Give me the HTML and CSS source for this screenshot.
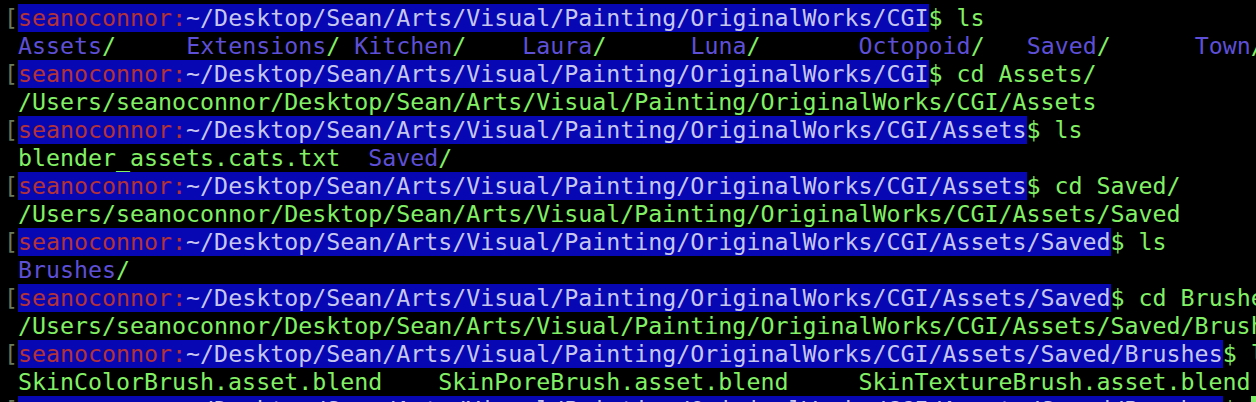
FILE: index.html
```html
<!DOCTYPE html>
<html>
<head>
<meta charset="utf-8">
<link rel="stylesheet" href="styles.css">
</head>
<body>
<div class="term">
<div class="row"><span class="br">[</span><span class="ps"><span class="u">seanoconnor:</span><span class="p">~/Desktop/Sean/Arts/Visual/Painting/OriginalWorks/CGI</span></span><span class="g">$ ls</span></div>
<div class="row"> <span class="d">Assets</span><span class="g">/</span>     <span class="d">Extensions</span><span class="g">/</span> <span class="d">Kitchen</span><span class="g">/</span>    <span class="d">Laura</span><span class="g">/</span>      <span class="d">Luna</span><span class="g">/</span>       <span class="d">Octopoid</span><span class="g">/</span>   <span class="d">Saved</span><span class="g">/</span>      <span class="d">Town</span><span class="g">/</span></div>
<div class="row"><span class="br">[</span><span class="ps"><span class="u">seanoconnor:</span><span class="p">~/Desktop/Sean/Arts/Visual/Painting/OriginalWorks/CGI</span></span><span class="g">$ cd Assets/</span></div>
<div class="row g"> /Users/seanoconnor/Desktop/Sean/Arts/Visual/Painting/OriginalWorks/CGI/Assets</div>
<div class="row"><span class="br">[</span><span class="ps"><span class="u">seanoconnor:</span><span class="p">~/Desktop/Sean/Arts/Visual/Painting/OriginalWorks/CGI/Assets</span></span><span class="g">$ ls</span></div>
<div class="row"> <span class="g">blender_assets.cats.txt</span>  <span class="d">Saved</span><span class="g">/</span></div>
<div class="row"><span class="br">[</span><span class="ps"><span class="u">seanoconnor:</span><span class="p">~/Desktop/Sean/Arts/Visual/Painting/OriginalWorks/CGI/Assets</span></span><span class="g">$ cd Saved/</span></div>
<div class="row g"> /Users/seanoconnor/Desktop/Sean/Arts/Visual/Painting/OriginalWorks/CGI/Assets/Saved</div>
<div class="row"><span class="br">[</span><span class="ps"><span class="u">seanoconnor:</span><span class="p">~/Desktop/Sean/Arts/Visual/Painting/OriginalWorks/CGI/Assets/Saved</span></span><span class="g">$ ls</span></div>
<div class="row"> <span class="d">Brushes</span><span class="g">/</span></div>
<div class="row"><span class="br">[</span><span class="ps"><span class="u">seanoconnor:</span><span class="p">~/Desktop/Sean/Arts/Visual/Painting/OriginalWorks/CGI/Assets/Saved</span></span><span class="g">$ cd Brushes/</span></div>
<div class="row g"> /Users/seanoconnor/Desktop/Sean/Arts/Visual/Painting/OriginalWorks/CGI/Assets/Saved/Brushes</div>
<div class="row"><span class="br">[</span><span class="ps"><span class="u">seanoconnor:</span><span class="p">~/Desktop/Sean/Arts/Visual/Painting/OriginalWorks/CGI/Assets/Saved/Brushes</span></span><span class="g">$ ls</span></div>
<div class="row g"> SkinColorBrush.asset.blend    SkinPoreBrush.asset.blend     SkinTextureBrush.asset.blend</div>
<div class="row"><span class="br">[</span><span class="ps"><span class="u">seanoconnor:</span><span class="p">~/Desktop/Sean/Arts/Visual/Painting/OriginalWorks/CGI/Assets/Saved/Brushes</span></span><span class="g">$ </span><span class="cur"> </span></div>
</div>
</body>
</html>
```

FILE: styles.css
```css
html, body {
  margin: 0;
  padding: 0;
  background: #000;
  overflow: hidden;
}
.term {
  padding: 4px 0 0 4px;
  font-family: "DejaVu Sans Mono", "Liberation Mono", monospace;
  font-size: 23.27px;
  color: #c4c4ec;
  width: 1252px;
  height: 398px;
  overflow: hidden;
}
.row {
  height: 28px;
  line-height: 28px;
  white-space: pre;
}
.br { color: #6b7a5c; }
.ps {
  background: #0707b4;
  display: inline-block;
  height: 28px;
  vertical-align: top;
}
.u { color: #b33238; }
.p { color: #c6c6ee; }
.g { color: #82f065; }
.d { color: #5d4fd6; }
.cur {
  background: #82f065;
  display: inline-block;
  height: 28px;
  vertical-align: top;
}
```
